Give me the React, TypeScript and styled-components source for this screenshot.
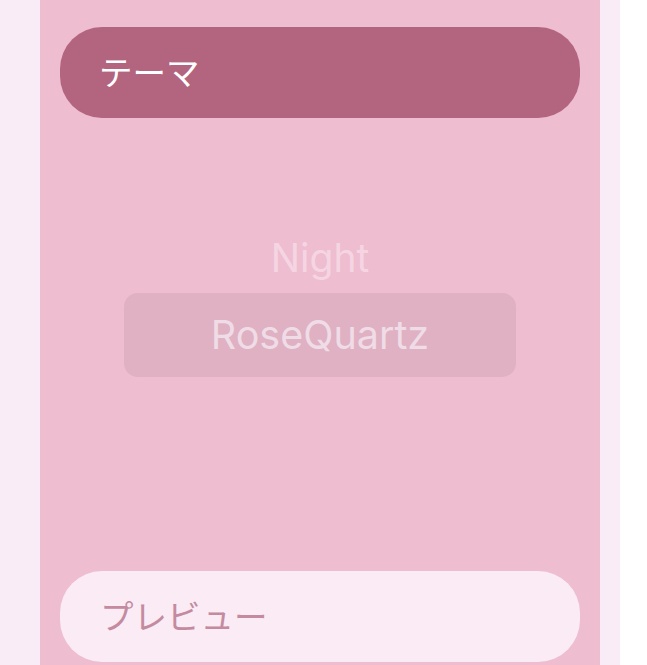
import React from "react";
import styled, { createGlobalStyle } from "styled-components";

const Global = createGlobalStyle`
  html, body { margin: 0; padding: 0; background: #ffffff; }
  body { font-family: Inter, Roboto, "Noto Sans CJK JP", sans-serif; }
`;

const Page = styled.div`
  width: 620px;
  height: 665px;
  background: #faecf6;
  padding: 0 20px 0 40px;
  box-sizing: border-box;
  overflow: hidden;
`;

const Panel = styled.div`
  height: 100%;
  background: #eebdd0;
  padding: 27px 20px 3px;
  box-sizing: border-box;
  display: flex;
  flex-direction: column;
`;

const Bar = styled.div<{ $variant: "solid" | "light" }>`
  height: 91px;
  border-radius: 42px;
  display: flex;
  align-items: center;
  padding: 0 ${(p) => (p.$variant === "solid" ? 39 : 40)}px 4px;
  box-sizing: border-box;
  font-family: "Noto Sans CJK JP", sans-serif;
  font-size: 33.5px;
  font-weight: 400;
  background: ${(p) => (p.$variant === "solid" ? "#b3647e" : "#faebf5")};
  color: ${(p) => (p.$variant === "solid" ? "#ffffff" : "#c48ba0")};
  flex-shrink: 0;
`;

const Center = styled.div`
  flex: 1;
  display: flex;
  flex-direction: column;
  align-items: center;
  justify-content: flex-start;
  gap: 12px;
  padding-top: 117px;
`;

const Subtitle = styled.div`
  font-family: Inter, Roboto, sans-serif;
  font-size: 39px;
  color: #f6d5e3;
  line-height: 46px;
`;

const ThemeBox = styled.div`
  width: 392px;
  height: 84px;
  border-radius: 14px;
  background: #dfb1c3;
  display: flex;
  align-items: center;
  justify-content: center;
  font-family: Inter, Roboto, sans-serif;
  font-size: 39.5px;
  color: #efdce6;
`;

export default function App() {
  return (
    <>
      <Global />
      <Page>
        <Panel>
          <Bar $variant="solid">テーマ</Bar>
          <Center>
            <Subtitle>Night</Subtitle>
            <ThemeBox>RoseQuartz</ThemeBox>
          </Center>
          <Bar $variant="light">プレビュー</Bar>
        </Panel>
      </Page>
    </>
  );
}
